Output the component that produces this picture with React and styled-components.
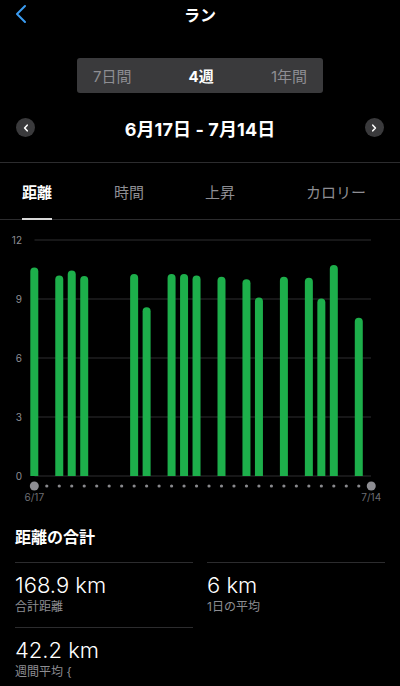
import React from "react";
import styled, { createGlobalStyle } from "styled-components";

const Global = createGlobalStyle`
  html, body { margin: 0; padding: 0; background: #000; }
  body { font-family: "Inter", "Noto Sans CJK JP", sans-serif; color: #fff; -webkit-font-smoothing: antialiased; }
`;

const Page = styled.div`
  width: 400px;
  height: 686px;
  overflow: hidden;
  background: #000;
`;

const Header = styled.header`
  position: relative;
  height: 30px;
  display: flex;
  align-items: center;
  justify-content: center;
`;

const BackButton = styled.button`
  position: absolute;
  left: 14px;
  top: 4px;
  background: none;
  border: none;
  padding: 0;
  display: flex;
`;

const Title = styled.h1`
  margin: 0;
  font-size: 16px;
  font-weight: 600;
  line-height: 28px;
`;

const Segmented = styled.div`
  margin: 28px auto 0;
  width: 246px;
  height: 35px;
  box-sizing: border-box;
  padding: 0 16px;
  background: #3a3a3c;
  border-radius: 3px;
  display: flex;
  align-items: center;
  justify-content: space-between;
`;

const Segment = styled.span`
  font-size: 15px;
  font-weight: ${(p) => (p.$active ? 700 : 400)};
  color: ${(p) => (p.$active ? "#fff" : "#8e8e93")};
`;

const DateNav = styled.div`
  height: 35px;
  margin-top: 17px;
  padding: 0 16px;
  display: flex;
  align-items: center;
  justify-content: space-between;
`;

const NavCircle = styled.button`
  width: 19px;
  height: 19px;
  border-radius: 50%;
  background: #3a3a3c;
  border: none;
  padding: 0;
  display: flex;
  align-items: center;
  justify-content: center;
`;

const DateText = styled.div`
  font-size: 18px;
  font-weight: 700;
  letter-spacing: 0.1px;
`;

const Divider = styled.div`
  height: 1px;
  background: #2c2c2e;
  margin-top: ${(p) => p.$top || 0}px;
`;

const Tabs = styled.nav`
  display: grid;
  grid-template-columns: 92px 91px 101px auto;
  padding-left: 22px;
  height: 56px;
  border-bottom: 1px solid #2c2c2e;
`;

const Tab = styled.div`
  justify-self: start;
  display: flex;
  align-items: center;
  font-size: 15px;
  font-weight: ${(p) => (p.$active ? 700 : 400)};
  color: ${(p) => (p.$active ? "#fff" : "#8e8e93")};
  border-bottom: 2px solid ${(p) => (p.$active ? "#d8d8d8" : "transparent")};
  margin-bottom: -1px;
  padding-top: 1px;
`;

const ChartSvg = styled.svg`
  display: block;
  width: 400px;
  height: 290px;
`;

const Stats = styled.section`
  padding: 17px 15px 0;
`;

const StatsTitle = styled.h2`
  margin: 0;
  font-size: 16px;
  font-weight: 700;
  line-height: 20px;
`;

const StatGrid = styled.div`
  display: grid;
  grid-template-columns: 178px 178px;
  column-gap: 14px;
  margin-top: 15px;
`;

const Stat = styled.div`
  border-top: 1px solid #2c2c2e;
  padding-top: 9px;
  height: 55px;
`;

const StatValue = styled.div`
  font-size: 22px;
  font-weight: 300;
  line-height: 26px;
`;

const StatLabel = styled.div`
  font-size: 12px;
  color: #8e8e93;
  line-height: 16px;
  margin-top: 1px;
`;

const data = {
  0: 10.6, 2: 10.2, 3: 10.45, 4: 10.17, 8: 10.27, 9: 8.58, 11: 10.27, 12: 10.27,
  13: 10.19, 15: 10.13, 17: 10.0, 18: 9.07, 20: 10.13, 22: 10.08, 23: 9.03, 24: 10.73, 26: 8.05,
};

const Chart = () => {
  const x0 = 34.3;
  const step = 12.48;
  const zeroY = 256;
  const unit = 59 / 3;
  const grid = [12, 9, 6, 3, 0];
  const days = Array.from({ length: 28 }, (_, i) => i);
  return (
    <ChartSvg viewBox="0 0 400 290">
      {grid.map((g) => {
        const y = zeroY - g * unit;
        return (
          <g key={g}>
            <line x1="34.5" x2="371" y1={y} y2={y} stroke="#2e2e30" strokeWidth="1" />
            <text x="22" y={y + 3.5} textAnchor="end" fontSize="10" fill="#8e8e93" fontFamily="Inter, sans-serif">
              {g}
            </text>
          </g>
        );
      })}
      {Object.entries(data).map(([d, v]) => {
        const cx = x0 + Number(d) * step;
        const top = zeroY - v * unit;
        const l = cx - 4;
        const r = cx + 4;
        return (
          <path
            key={d}
            d={`M${l} ${zeroY} L${l} ${top + 4} A4 4 0 0 1 ${r} ${top + 4} L${r} ${zeroY} Z`}
            fill="#1daf4b"
          />
        );
      })}
      {days.map((d) => {
        const cx = x0 + d * step;
        const big = d === 0 || d === 27;
        return <circle key={d} cx={cx} cy="266" r={big ? 4.5 : 1.6} fill={big ? "#8e8e93" : "#8a8a8e"} />;
      })}
      <text x={x0} y="281" textAnchor="middle" fontSize="10" fill="#6e6e73" fontFamily="Inter, sans-serif">6/17</text>
      <text x={x0 + 27 * step} y="281" textAnchor="middle" fontSize="10" fill="#6e6e73" fontFamily="Inter, sans-serif">7/14</text>
    </ChartSvg>
  );
};

const Chevron = ({ dir }) => (
  <svg width="8" height="8" viewBox="0 0 8 8">
    <path
      d={dir === "left" ? "M5.2 1.2 L2.6 4 L5.2 6.8" : "M2.8 1.2 L5.4 4 L2.8 6.8"}
      fill="none"
      stroke="#fff"
      strokeWidth="1.6"
      strokeLinecap="round"
      strokeLinejoin="round"
    />
  </svg>
);

export default function App() {
  return (
    <Page>
      <Global />
      <Header>
        <BackButton aria-label="back">
          <svg width="14" height="20" viewBox="0 0 14 20">
            <path d="M11 2 L3 10 L11 18" fill="none" stroke="#3b9cf2" strokeWidth="2" strokeLinecap="round" strokeLinejoin="round" />
          </svg>
        </BackButton>
        <Title>ラン</Title>
      </Header>
      <Segmented>
        <Segment>7日間</Segment>
        <Segment $active>4週</Segment>
        <Segment>1年間</Segment>
      </Segmented>
      <DateNav>
        <NavCircle aria-label="prev"><Chevron dir="left" /></NavCircle>
        <DateText>6月17日 - 7月14日</DateText>
        <NavCircle aria-label="next"><Chevron dir="right" /></NavCircle>
      </DateNav>
      <Divider $top={17} />
      <Tabs>
        <Tab $active>距離</Tab>
        <Tab>時間</Tab>
        <Tab>上昇</Tab>
        <Tab>カロリー</Tab>
      </Tabs>
      <Chart />
      <Stats>
        <StatsTitle>距離の合計</StatsTitle>
        <StatGrid>
          <Stat>
            <StatValue>168.9 km</StatValue>
            <StatLabel>合計距離</StatLabel>
          </Stat>
          <Stat>
            <StatValue>6 km</StatValue>
            <StatLabel>1日の平均</StatLabel>
          </Stat>
          <Stat>
            <StatValue>42.2 km</StatValue>
            <StatLabel>週間平均 {"{"}</StatLabel>
          </Stat>
        </StatGrid>
      </Stats>
    </Page>
  );
}
